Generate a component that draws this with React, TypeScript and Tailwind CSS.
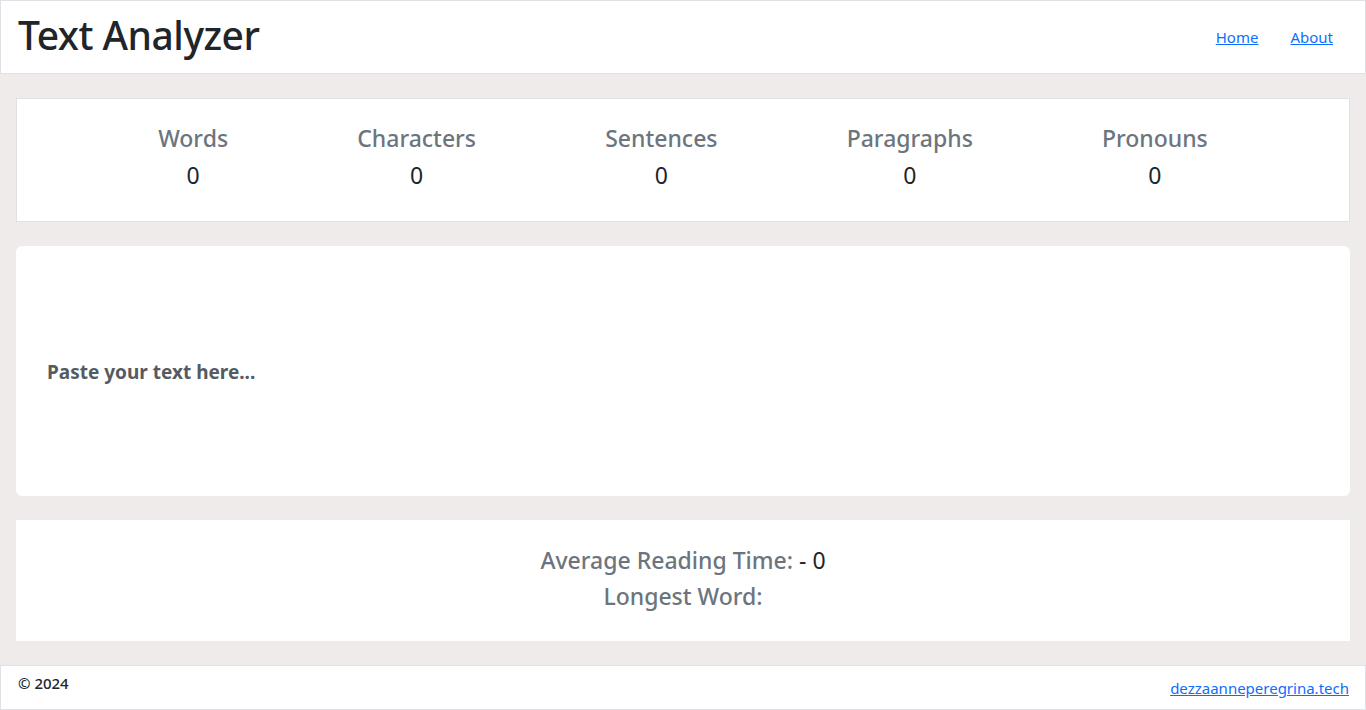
import { useState } from "react";

const stats = ["Words", "Characters", "Sentences", "Paragraphs", "Pronouns"];

export default function App() {
  const [text, setText] = useState("");

  return (
    <div
      className="min-h-[710px] bg-[#efebea] text-[#212529] flex flex-col"
      style={{ fontFamily: '"Noto Sans", "Open Sans", sans-serif' }}
    >
      {/* Header */}
      <header className="h-[74px] bg-white border border-[#dee2e6] flex items-center justify-between pl-[17px] pr-[32px]">
        <h1 className="text-[39px] font-medium tracking-[-0.5px] leading-none pb-[5px]">
          Text Analyzer
        </h1>
        <nav className="flex items-center gap-[32px]">
          <a href="#" className="text-[15px] text-[#0d6efd] underline">
            Home
          </a>
          <a href="#" className="text-[15px] text-[#0d6efd] underline">
            About
          </a>
        </nav>
      </header>

      <main className="flex flex-col gap-[24px] px-[16px] pt-[24px] pb-[24px]">
        {/* Stats */}
        <section className="bg-white border border-[#dee2e6] flex justify-evenly px-[12px] pt-[25px] pb-[31px]">
          {stats.map((s) => (
            <div key={s} className="flex flex-col items-center gap-[8px]">
              <span className="text-[23px] font-medium text-[#6c757d] leading-[29px]">
                {s}
              </span>
              <span className="text-[23px] leading-[29px]">0</span>
            </div>
          ))}
        </section>

        {/* Text input */}
        <section className="bg-white rounded-md h-[250px]">
          <textarea
            value={text}
            onChange={(e) => setText(e.target.value)}
            placeholder="Paste your text here..."
            className="w-full h-full resize-none outline-none bg-transparent px-[31px] pt-[112px] text-[19px] font-bold text-[#555b61] placeholder:text-[#555b61]"
          />
        </section>

        {/* Extra info */}
        <section className="bg-white h-[121px] flex flex-col items-center pt-[22px] text-[23px] leading-[36px]">
          <p>
            <span className="font-medium text-[#6c757d]">Average Reading Time:</span>{" "}
            <span>- 0</span>
          </p>
          <p>
            <span className="font-medium text-[#6c757d]">Longest Word:</span>
          </p>
        </section>
      </main>

      {/* Footer */}
      <footer className="h-[45px] bg-white border border-[#dee2e6] flex justify-between pl-[17px] pr-[16px]">
        <span className="text-[15px] font-medium pt-[6px]">© 2024</span>
        <a href="#" className="text-[15px] text-[#0d6efd] underline pt-[11px]">
          dezzaanneperegrina.tech
        </a>
      </footer>
    </div>
  );
}
